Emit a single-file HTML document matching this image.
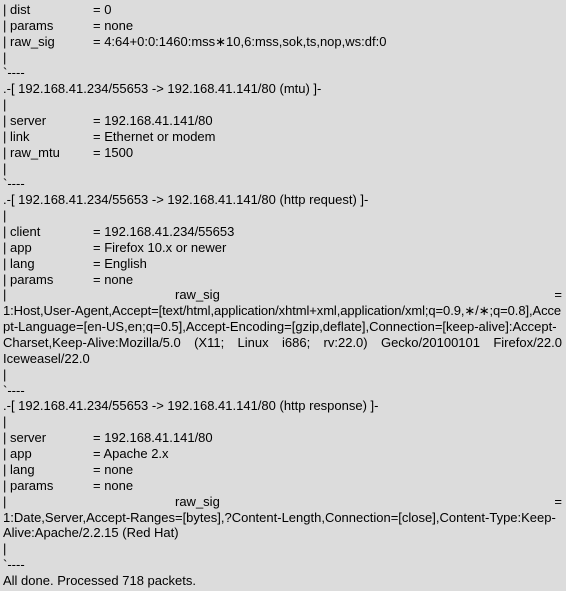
<!DOCTYPE html>
<html><head><meta charset="utf-8"><style>
html,body{margin:0;padding:0;}
body{width:566px;height:591px;background:#dcdcdc;overflow:hidden;font-family:"Liberation Sans",Arial,sans-serif;font-size:13px;line-height:15.86px;color:#000;}
#c{position:absolute;left:3px;top:2px;width:559px;}
.l{white-space:pre;height:15.86px;}
.k{display:inline-block;width:90px;}
.sb{position:relative;height:15.86px;white-space:pre;}
.sb .m{position:absolute;left:172px;top:0;}
.sb .e{position:absolute;right:0;top:0;}
.j{text-align:justify;text-align-last:justify;white-space:nowrap;height:15.86px;}
.j2{white-space:nowrap;height:15.86px;}
</style></head><body><div id="c">
<div class="l"><span class="k">| dist</span>= 0</div>
<div class="l"><span class="k">| params</span>= none</div>
<div class="l"><span class="k">| raw_sig</span>= 4:64+0:0:1460:mss∗10,6:mss,sok,ts,nop,ws:df:0</div>
<div class="l">|</div>
<div class="l">`----</div>
<div class="l">.-[ 192.168.41.234/55653 -&gt; 192.168.41.141/80 (mtu) ]-</div>
<div class="l">|</div>
<div class="l"><span class="k">| server</span>= 192.168.41.141/80</div>
<div class="l"><span class="k">| link</span>= Ethernet or modem</div>
<div class="l"><span class="k">| raw_mtu</span>= 1500</div>
<div class="l">|</div>
<div class="l">`----</div>
<div class="l">.-[ 192.168.41.234/55653 -&gt; 192.168.41.141/80 (http request) ]-</div>
<div class="l">|</div>
<div class="l"><span class="k">| client</span>= 192.168.41.234/55653</div>
<div class="l"><span class="k">| app</span>= Firefox 10.x or newer</div>
<div class="l"><span class="k">| lang</span>= English</div>
<div class="l"><span class="k">| params</span>= none</div>
<div class="sb"><span>|</span><span class="m">raw_sig</span><span class="e">=</span></div>
<div class="j2" style="letter-spacing:-0.09px">1:Host,User-Agent,Accept=[text/html,application/xhtml+xml,application/xml;q=0.9,∗/∗;q=0.8],Acce</div>
<div class="j">pt-Language=[en-US,en;q=0.5],Accept-Encoding=[gzip,deflate],Connection=[keep-alive]:Accept-</div>
<div class="j">Charset,Keep-Alive:Mozilla/5.0 (X11; Linux i686; rv:22.0) Gecko/20100101 Firefox/22.0</div>
<div class="l">Iceweasel/22.0</div>
<div class="l">|</div>
<div class="l">`----</div>
<div class="l">.-[ 192.168.41.234/55653 -&gt; 192.168.41.141/80 (http response) ]-</div>
<div class="l">|</div>
<div class="l"><span class="k">| server</span>= 192.168.41.141/80</div>
<div class="l"><span class="k">| app</span>= Apache 2.x</div>
<div class="l"><span class="k">| lang</span>= none</div>
<div class="l"><span class="k">| params</span>= none</div>
<div class="sb"><span>|</span><span class="m">raw_sig</span><span class="e">=</span></div>
<div class="j2">1:Date,Server,Accept-Ranges=[bytes],?Content-Length,Connection=[close],Content-Type:Keep-</div>
<div class="l">Alive:Apache/2.2.15 (Red Hat)</div>
<div class="l">|</div>
<div class="l">`----</div>
<div class="l">All done. Processed 718 packets.</div>
</div></body></html>
